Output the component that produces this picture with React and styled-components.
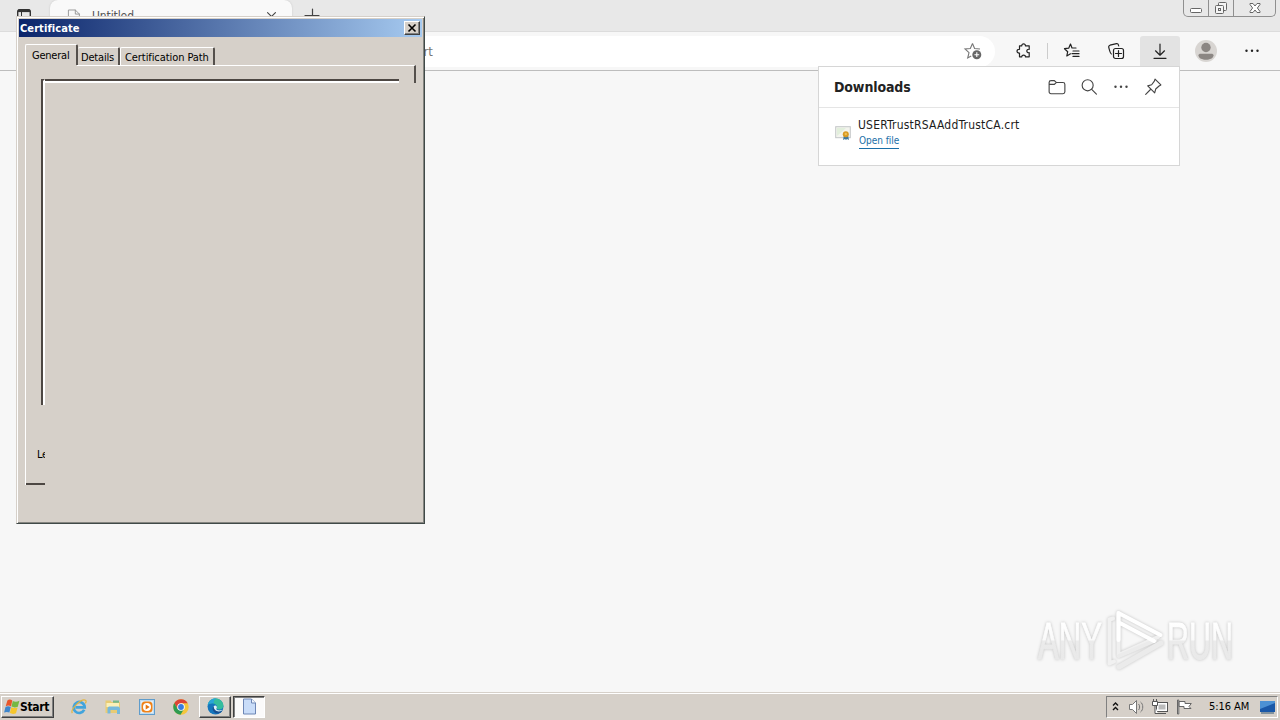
import React from "react";
import styled, { createGlobalStyle } from "styled-components";

const Global = createGlobalStyle`
  * { box-sizing: border-box; }
  html, body { margin: 0; padding: 0; overflow: hidden; }
  body { font-family: "DejaVu Sans Condensed", "DejaVu Sans", sans-serif; font-size: 11px; color: #000; }
  svg { display: block; flex: none; overflow: visible; }
`;

const Screen = styled.div`
  position: relative;
  width: 1280px;
  height: 720px;
  display: flex;
  flex-direction: column;
  overflow: hidden;
  background: #f7f7f7;
`;

/* Browser */
const TabStrip = styled.div`
  height: 32px;
  flex: none;
  display: flex;
  align-items: flex-start;
  background: #e8e8e8;
  border-bottom: 1px solid #dcdcdc;
`;
const TabActions = styled.div`
  width: 50px;
  height: 32px;
  padding: 9px 0 0 17px;
`;
const Tab = styled.div`
  width: 242px;
  height: 32px;
  display: flex;
  align-items: center;
  padding: 0 16px 0 18px;
  border-radius: 8px 8px 0 0;
  background: #f9f9f9;
  box-shadow: 0 0 2px #c4c4c4;
`;
const TabTitle = styled.span`
  flex: 1;
  margin-left: 11px;
  font-size: 12px;
  color: #555;
  letter-spacing: -0.1px;
`;
const NewTab = styled.div`
  padding: 8px 0 0 12px;
  flex: 1;
`;
const WindowButtons = styled.div`
  display: flex;
  height: 17px;
  width: 93px;
  margin-right: 4px;
  border: 1px solid #8f8f8f;
  border-top: 0;
  border-radius: 0 0 5px 5px;
`;
const WindowButton = styled.div`
  width: ${(p) => p.$w}px;
  display: flex;
  justify-content: center;
  border-right: ${(p) => (p.$last ? "0" : "1px solid #8f8f8f")};
`;
const Toolbar = styled.div`
  height: 39px;
  flex: none;
  display: flex;
  align-items: center;
  background: #f7f7f7;
  border-bottom: 1px solid #bdbdbd;
`;
const AddressBar = styled.div`
  width: 895px;
  height: 31px;
  margin-left: 100px;
  padding: 0 13px 0 317px;
  display: flex;
  align-items: center;
  justify-content: space-between;
  border-radius: 16px;
  background: #fff;
  font-size: 13px;
  color: #767676;
`;
const ToolButton = styled.div`
  width: ${(p) => p.$w || 40}px;
  height: 30px;
  margin-left: ${(p) => p.$ml || 0}px;
  display: flex;
  align-items: center;
  justify-content: center;
  border-radius: 3px 3px 0 0;
  background: ${(p) => (p.$active ? "#e3e3e3" : "transparent")};
`;
const Divider = styled.div`
  width: 1px;
  height: 16px;
  margin-left: 3px;
  background: #ccc;
`;
const Page = styled.div`
  flex: 1;
  display: flex;
  justify-content: flex-end;
  align-items: flex-end;
  padding: 0 46px 19px 0;
  background: #f7f7f7;
`;
const Watermark = styled.svg`
  font-family: "Liberation Sans", sans-serif;
  font-size: 51px;
  filter: drop-shadow(0 0 1.5px rgba(0, 0, 0, 0.22));
`;

/* Downloads flyout */
const Flyout = styled.section`
  position: absolute;
  left: 818px;
  top: 66px;
  width: 362px;
  height: 100px;
  background: #fff;
  border: 1px solid #d6d6d6;
`;
const FlyoutHeader = styled.header`
  height: 41px;
  display: flex;
  align-items: center;
  padding: 0 17px 0 15px;
  border-bottom: 1px solid #e5e5e5;
`;
const FlyoutTitle = styled.h2`
  flex: 1;
  margin: 0;
  font-size: 14px;
  font-weight: 700;
  letter-spacing: -0.12px;
  color: #222;
`;
const FlyoutActions = styled.div`
  display: flex;
  gap: 14px;
`;
const DownloadRow = styled.div`
  display: flex;
  padding: 9px 0 0 16px;
`;
const DownloadInfo = styled.div`
  display: flex;
  flex-direction: column;
  align-items: flex-start;
  margin-left: 7px;
`;
const FileName = styled.span`
  font-size: 12px;
  line-height: 16px;
  letter-spacing: 0.21px;
  color: #1c1c1c;
`;
const OpenLink = styled.a`
  font-size: 10px;
  line-height: 13px;
  margin-top: 1px;
  padding-bottom: 1px;
  margin-left: 1px;
  letter-spacing: -0.03px;
  color: #1a6fa8;
  border-bottom: 1px solid #1a6fa8;
`;

/* Certificate dialog */
const Dialog = styled.section`
  position: absolute;
  left: 16px;
  top: 16px;
  width: 409px;
  height: 508px;
  background: #d6d0c9;
  border: 1px solid #d6d0c9;
  border-right-color: #404a48;
  border-bottom-color: #404a48;
  box-shadow: inset 1px 1px #fff, inset -1px -1px #858580;
  padding: 2px;
`;
const TitleBar = styled.header`
  height: 18px;
  display: flex;
  align-items: center;
  justify-content: space-between;
  padding: 0 2px 0 1px;
  background: linear-gradient(90deg, #0a246a, #a6caf0);
  color: #fff;
  font-weight: 700;
  letter-spacing: 0.08px;
`;
const CloseButton = styled.div`
  width: 16px;
  height: 14px;
  display: flex;
  align-items: center;
  justify-content: center;
  background: #d6d0c9;
  border: 1px solid #fff;
  border-right-color: #404040;
  border-bottom-color: #404040;
  box-shadow: inset -1px -1px #808080;
`;
const DialogTabs = styled.div`
  display: flex;
  align-items: flex-end;
  height: 28px;
  padding-left: 6px;
`;
const DialogTab = styled.div`
  width: ${(p) => p.$w}px;
  height: ${(p) => (p.$active ? 21 : 18)}px;
  padding: ${(p) => (p.$active ? 4 : 3)}px 0 0 ${(p) => p.$pl}px;
  line-height: 13px;
  white-space: nowrap;
  letter-spacing: ${(p) => p.$ls}px;
  border: 1px solid #fff;
  border-left-width: ${(p) => (p.$joined ? 0 : 1)}px;
  border-right: 2px solid #55504c;
  border-bottom: 0;
  border-radius: 2px 2px 0 0;
`;
const TabPanel = styled.div`
  width: 391px;
  height: 420px;
  margin-left: 6px;
  display: grid;
  grid-template: 18px 1fr / 20px 1fr;
  border-left: 1px solid #fff;
`;
const PanelTop = styled.div`
  grid-column: 1 / 3;
  display: flex;
  justify-content: flex-end;
  align-items: flex-end;
  margin-left: 51px;
  border-top: 1px solid #fff;
  border-right: 2px solid #55504c;
`;
const GroupTop = styled.div`
  width: 357px;
  height: 4px;
  flex: none;
  margin-right: 15px;
  border-top: 2px solid #4d4743;
  border-bottom: 2px solid #fff;
`;
const PanelLeft = styled.div`
  display: flex;
  flex-direction: column;
  width: 19px;
  border-bottom: 2px solid #4d4743;
`;
const GroupLeft = styled.div`
  width: 4px;
  height: 326px;
  flex: none;
  margin: -4px 0 0 15px;
  border-left: 2px solid #4d4743;
  border-top: 2px solid #4d4743;
  border-right: 2px solid #fff;
`;
const Clipped = styled.div`
  width: 8px;
  margin: 43px 0 0 11px;
  overflow: hidden;
  white-space: nowrap;
  line-height: 13px;
  letter-spacing: -0.4px;
`;

/* Taskbar */
const Taskbar = styled.footer`
  height: 28px;
  flex: none;
  display: flex;
  align-items: center;
  padding: 0 2px 0 1px;
  background: #d6d0c9;
  border-top: 1px solid #d6d0c9;
  box-shadow: inset 0 1px #fff;
`;
const StartButton = styled.div`
  width: 53px;
  height: 22px;
  display: flex;
  align-items: center;
  padding-left: 2px;
  border: 1px solid #fff;
  border-right-color: #404040;
  border-bottom-color: #404040;
  box-shadow: inset -1px -1px #808080;
  font-size: 12px;
  font-weight: 700;
  letter-spacing: -0.3px;
`;
const QuickLaunch = styled.div`
  display: flex;
  gap: 18px;
  margin-left: 17px;
`;
const TaskButton = styled.div`
  width: 32px;
  height: 22px;
  margin-left: ${(p) => p.$ml}px;
  display: flex;
  align-items: center;
  justify-content: center;
  background: ${(p) => (p.$pressed ? "#fbfafa" : "#d6d0c9")};
  border: 1px solid;
  border-color: ${(p) => (p.$pressed ? "#404040 #fff #fff #404040" : "#fff #404040 #404040 #fff")};
  box-shadow: ${(p) => (p.$pressed ? "inset 1px 1px #808080" : "inset -1px -1px #808080")};
`;
const Tray = styled.div`
  width: 172px;
  height: 22px;
  margin-left: auto;
  display: flex;
  align-items: center;
  padding-left: 5px;
  border: 1px solid #808080;
  border-right-color: #fff;
  border-bottom-color: #fff;
`;
const TrayIcons = styled.div`
  display: flex;
  align-items: center;
  gap: 8px;
`;
const Clock = styled.time`
  width: 42px;
  margin: 0 9px 0 17px;
  white-space: nowrap;
  letter-spacing: -0.05px;
`;

const Icon = ({ size = 16, sw = 1.2, color = "#222", children }) => (
  <svg width={size} height={size} viewBox="0 0 16 16" fill="none" stroke={color} strokeWidth={sw} strokeLinejoin="round" strokeLinecap="round">
    {children}
  </svg>
);

const Dots = ({ color = "#222" }) => (
  <svg width="18" height="18" viewBox="0 0 18 18" fill={color}>
    <circle cx="3.5" cy="8.8" r="1.2" /><circle cx="9" cy="8.8" r="1.2" /><circle cx="14.5" cy="8.8" r="1.2" />
  </svg>
);

const CertFile = () => (
  <svg width="16" height="16" viewBox="0 0 16 16" style={{ marginTop: 8 }}>
    <rect x="0.7" y="1.7" width="14.6" height="11" fill="#f3f4ee" stroke="#c3c6c8" />
    <path d="M2 11V3h9Z" fill="#e2efdc" />
    <path d="m9 10-1 5 2-1 1 1 1-1 2 1-1-5Z" fill="#3f789c" />
    <circle cx="10.8" cy="9.2" r="3" fill="#d79a22" />
    <circle cx="10.8" cy="9" r="1.2" fill="#f0bf50" />
  </svg>
);

const WindowsFlag = () => (
  <svg width="16" height="16" viewBox="0 0 16 16">
    <path d="M3.4 1.4C5 .2 6.8.5 8.300 1.500L7 7.400C5.200 6.300 3.400 6.400 1.700 7.300Z" fill="#e8562a" />
    <path d="M8.800 1.900c1.900 1 4.200 1 6.600-.2l-1.600 6c-2.200 1-4.300.9-6.300-.1Z" fill="#75b843" />
    <path d="M1.500 8c1.700-.9 3.500-.9 5.300.1l-1.400 5.500c-1.700-.9-3.500-.9-5.300 0Z" fill="#3e86cc" />
    <path d="M7.300 8.300c1.900 1 4.100 1.100 6.300.1l-1.600 5.800c-2.100 1-4.200.9-6.100-.1Z" fill="#f6c62c" />
  </svg>
);

const IeIcon = () => (
  <svg width="16" height="16" viewBox="0 0 16 16" fill="none">
    <path d="M13.200 10.800A5.500 5.500 0 1 1 13.700 8.300H4.500" stroke="#42a4dc" strokeWidth="2.700" />
    <path d="M1.300 14.200C-1 11 10-1 14.500 1.200c1 .6.7 2-.2 3.200" stroke="#e4b43d" strokeWidth="1.200" />
  </svg>
);

const FolderIcon = () => (
  <svg width="16" height="16" viewBox="0 0 16 16">
    <path d="M.5 1.500h5l1 1.500h8.500V14H.5Z" fill="#e8cb74" />
    <path d="M1.500 4h12.500v4H1.500Z" fill="#fbf0b8" />
    <path d="M8 1.500h6v2.300H8Z" fill="#77b88a" />
    <path d="M2.500 14.500V10C2.500 8 3.700 7.500 5 7.500h7c1.500 0 3 .5 3 2.500V15h-3v-4H5.500v3.500Z" fill="#76b9dc" />
  </svg>
);

const MediaIcon = () => (
  <svg width="16" height="16" viewBox="0 0 16 16">
    <rect x="0.5" y="0.5" width="15" height="15" fill="#bfdcf2" stroke="#5f9ccb" />
    <rect x="2" y="2" width="12" height="12" fill="#e1eef7" />
    <rect x="2.500" y="2.500" width="11" height="11" rx="3.500" fill="#ef8219" />
    <circle cx="8" cy="8" r="4" fill="#fff" />
    <path d="m6.700 5.500 4 2.500-4 2.500Z" fill="#e57510" />
  </svg>
);

const ChromeIcon = () => (
  <svg width="16" height="16" viewBox="0 0 16 16">
    <circle cx="8" cy="8" r="7.7" fill="#f4c63c" />
    <path d="M1.300 4.100A7.700 7.700 0 0 1 14.700 4.200H8L4.700 10Z" fill="#dc4437" />
    <path d="M1.300 4.100A7.700 7.700 0 0 0 7.500 15.700L11 10H4.700Z" fill="#2e9b51" />
    <circle cx="8" cy="8" r="3.800" fill="#fff" /><circle cx="8" cy="8" r="2.900" fill="#397de0" />
  </svg>
);

const EdgeIcon = () => (
  <svg width="17" height="17" viewBox="0 0 17 17">
    <circle cx="8.500" cy="8.500" r="8" fill="#1576bd" />
    <path d="M.7 7C2 2 6 .3 9.200.6c4.200.3 7.200 3.700 7.200 7 0 2.700-2 4-4 4-2.300 0-3.200-.8-2.700-1.500C11 8.200 9 5.800 6.500 5.400 3.600 5 1.700 6 .7 7Z" fill="#35bd9d" />
    <path d="M.7 7C2 2 6 .3 9.200.6c-3 1.700-2 4-2.700 4.800C3.600 5 1.700 6 .7 7Z" fill="#2aa6d8" />
    <path d="M6.800 8C5 11 7.700 15 12 14c1.500-.3 2.500-1 3.300-2.200-3 1.300-7.300.4-5.600-1.700.9-1.300-.8-3.700-2.900-2.100Z" fill="#e2f0f6" />
    <path d="M6.800 8C4.300 10.500 6 14.400 9.700 15.400c2 .2 4.500-.8 5.600-2.700-5 2.200-9-.7-8.500-4.700Z" fill="#174f91" />
  </svg>
);

const DocumentIcon = () => (
  <svg width="15" height="17" viewBox="0 0 15 17">
    <path d="M1.500 1h8l4 4v11h-12Z" fill="#c9dcf8" stroke="#6d86b5" />
    <path d="M9.500 1v4h4" fill="#f4f8ff" stroke="#6d86b5" />
  </svg>
);

const AnyRunMark = () => (
  <Watermark width="200" height="64" viewBox="0 0 200 64">
    <defs>
      <linearGradient id="markFill" x1="0" y1="13" x2="0" y2="50" gradientUnits="userSpaceOnUse">
        <stop offset="0" stopColor="#fff" /><stop offset="0.48" stopColor="#fafafa" />
        <stop offset="0.52" stopColor="#ebebeb" /><stop offset="1" stopColor="#e9e9e9" />
      </linearGradient>
    </defs>
    <g fill="url(#markFill)" stroke="url(#markFill)" strokeWidth="0.8">
      <text x="4" y="50" textLength="64" lengthAdjust="spacingAndGlyphs">ANY</text>
      <text x="133" y="50" textLength="66" lengthAdjust="spacingAndGlyphs">RUN</text>
    </g>
    <g fill="none" strokeLinejoin="round" strokeLinecap="round">
      <path d="M79 9.500 75.500 10.500V54.500L80 52.500" stroke="#f1f1f1" strokeWidth="4" />
      <path d="M84.500 4v42L124 28" stroke="#f0f0f0" strokeWidth="4" />
      <path d="M85 58 127 34" stroke="#ebebeb" strokeWidth="5" />
      <path d="M85 47 121 31.500" stroke="#ebebeb" strokeWidth="4" />
      <path d="M84.500 31V4L126.500 26M86 14l34 18" stroke="#fff" strokeWidth="4" />
    </g>
  </Watermark>
);

export default function App() {
  return (
    <Screen>
      <Global />
      <TabStrip>
        <TabActions>
          <svg width="14" height="14" viewBox="0 0 14 14" fill="none" stroke="#333">
            <rect x="0.7" y="0.7" width="12.6" height="12" rx="2" strokeWidth="1.4" />
            <path d="M1 1.800h12" strokeWidth="2.600" /><path d="M4.500 3v10" />
          </svg>
        </TabActions>
        <Tab>
          <Icon size={13} color="#999"><path d="M1 0h8l5 5v11H1ZM9 0v5h5" /></Icon>
          <TabTitle>Untitled</TabTitle>
          <Icon size={9} color="#444" sw={2}><path d="m1 1 14 14M15 1 1 15" /></Icon>
        </Tab>
        <NewTab><Icon color="#444"><path d="M8.500 1v14M1 7.500h14" /></Icon></NewTab>
        <WindowButtons>
          <WindowButton $w={25}>
            <svg width="13" height="16" fill="#fff" stroke="#666"><rect x="0.500" y="8.500" width="11" height="4" rx="1" /></svg>
          </WindowButton>
          <WindowButton $w={25}>
            <svg width="13" height="16" fill="#f4f4f4" stroke="#666"><rect x="3.500" y="2.500" width="8" height="8" rx="1" /><rect x="0.500" y="5.500" width="8" height="8" rx="1" /><rect x="3.500" y="8.500" width="2" height="2" /></svg>
          </WindowButton>
          <WindowButton $w={41} $last>
            <svg width="12" height="16" fill="#fff" stroke="#666"><path d="M1 3.500h3l2 2.500 2-2.500h3v1L8.400 8l2.600 3.500v1H8L6 10l-2 2.500H1v-1L3.600 8 1 4.500Z" /></svg>
          </WindowButton>
        </WindowButtons>
      </TabStrip>

      <Toolbar>
        <AddressBar>
          <span>crt</span>
          <svg width="18" height="18" viewBox="0 0 18 18" fill="none" stroke="#777" strokeWidth="1.1">
            <path d="m8.500 1.500 2.100 5 5.400.5M8.500 1.500l-2.200 5L1 7l4 3.700L3.700 16l3.500-2" />
            <circle cx="12.800" cy="12.700" r="4.500" fill="#666" stroke="none" /><path d="M10.400 12.700h4.800M12.800 10.300v4.800" stroke="#fff" />
          </svg>
        </AddressBar>
        <ToolButton $ml={9}>
          <Icon><path d="M3.500 2.800h2.300C5.500.3 9.700.3 9.400 2.800H13.200V6.300C10 5.800 10 10.200 13.200 9.700V13.800H9.400C9.600 11.600 5.700 11.600 5.800 13.800H3.500V10C.2 10.400.2 5.900 3.500 6.300Z" /></Icon>
        </ToolButton>
        <Divider />
        <ToolButton $ml={4}>
          <Icon><path d="M6.500 1 8 5h4M6.500 1 4.700 5.200.5 5.700l3.200 3L2.800 13l3.700-2.200M9 8h6M8 10.700h7M9 13.400h6" /></Icon>
        </ToolButton>
        <ToolButton $ml={4}>
          <Icon><rect x="5.500" y="5.500" width="10" height="10" rx="2" /><path d="M10.500 7.500v6M7.500 10.500h6M3.500 11C2.700 11 2 9.500.8 4.700.4 3 1 2.500 2 2.200L8.500.6c1-.2 1.800.3 2.200 2.400" /></Icon>
        </ToolButton>
        <ToolButton $ml={4} $active>
          <Icon><path d="M8 1v11M3.500 7.800 8 12.200l4.500-4.400M2 15.300h12" /></Icon>
        </ToolButton>
        <ToolButton $ml={6}>
          <svg width="22" height="22" viewBox="0 0 22 22"><circle cx="11" cy="11" r="11" fill="#d8d5d2" /><circle cx="11" cy="7.500" r="4.700" fill="#8b8683" /><path d="M3.500 15.200c0-1 1-1.500 2-1.500h11c1 0 2 .5 2 1.500 0 6-15 6-15 0Z" fill="#8b8683" /></svg>
        </ToolButton>
        <ToolButton $ml={6}><Dots /></ToolButton>
      </Toolbar>

      <Page>
        <AnyRunMark />
      </Page>

      <Taskbar>
        <StartButton><WindowsFlag /><span>Start</span></StartButton>
        <QuickLaunch><IeIcon /><FolderIcon /><MediaIcon /><ChromeIcon /></QuickLaunch>
        <TaskButton $ml={10}><EdgeIcon /></TaskButton>
        <TaskButton $ml={2} $pressed><DocumentIcon /></TaskButton>
        <Tray>
          <TrayIcons>
            <svg width="8" height="12" fill="none" stroke="#111" strokeWidth="1.4"><path d="m1 4.500 2.500-2.500 2.500 2.500M1 9l2.500-2.500L6 9" /></svg>
            <svg width="16" height="16" fill="#fff" stroke="#777"><path d="M1.500 5.500h3l4-4v13l-4-4h-3Z" /><path d="M10.500 5c1.500 1 1.500 5 0 6M12.500 3c3 2 3 8 0 10" fill="none" /></svg>
            <svg width="16" height="16" fill="#fff" stroke="#555"><rect x="4.500" y="3.500" width="11" height="9" /><path d="M6 14.500h8" /><rect x="6.500" y="5.500" width="7" height="5" fill="#bbb" stroke="none" /><path d="M1.500 0v2M4.500 0v2M.5 2.500h5v4h-5ZM3 7v7.500h3" /></svg>
            <svg width="16" height="16" fill="#fff" stroke="#666"><path d="M1.500 1v14h1.300V1ZM3 2.500h6v2h6.300L13 7.500l2 2H8v-2H3Z" /></svg>
          </TrayIcons>
          <Clock>5:16 AM</Clock>
          <svg width="16" height="14" viewBox="0 0 16 14"><rect width="15" height="11" x="0" y="1" fill="#1a58a8" /><path d="M0 1h15v2L0 9Z" fill="#4c91d4" /><path d="M1 13h13" stroke="#315674" /></svg>
        </Tray>
      </Taskbar>

      <Flyout>
        <FlyoutHeader>
          <FlyoutTitle>Downloads</FlyoutTitle>
          <FlyoutActions>
            <Icon size={18} color="#444" sw={1}><path d="M1 4c0-1 .7-1.700 1.700-1.700h3L7.300 4h6c1 0 1.700.7 1.700 1.700v6.600c0 1-.7 1.700-1.700 1.700H2.700C1.700 14 1 13.300 1 12.300ZM1 5.700h4.700L7.300 4" /></Icon>
            <Icon size={18} color="#444" sw={1}><circle cx="6.800" cy="6.500" r="4.900" /><path d="m10.400 10.100 4.200 4.200" /></Icon>
            <Dots color="#444" />
            <Icon size={18} color="#444" sw={1}><path d="m9.800 1 5.200 5.200-1.600.9-3 2.700-.9 3.500L3.300 7l3.500-1 2.400-3.200ZM6 10l-4.500 4.500" /></Icon>
          </FlyoutActions>
        </FlyoutHeader>
        <DownloadRow>
          <CertFile />
          <DownloadInfo>
            <FileName>USERTrustRSAAddTrustCA.crt</FileName>
            <OpenLink>Open file</OpenLink>
          </DownloadInfo>
        </DownloadRow>
      </Flyout>

      <Dialog>
        <TitleBar>
          <span>Certificate</span>
          <CloseButton><svg width="9" height="8" stroke="#000" strokeWidth="1.6"><path d="m.5 .5 7 7M7.500 .5l-7 7" /></svg></CloseButton>
        </TitleBar>
        <DialogTabs>
          <DialogTab $w={53} $pl={6} $ls={-0.22} $active>General</DialogTab>
          <DialogTab $w={42} $pl={3} $ls={-0.18} $joined>Details</DialogTab>
          <DialogTab $w={95} $pl={4} $ls={-0.08}>Certification Path</DialogTab>
        </DialogTabs>
        <TabPanel>
          <PanelTop><GroupTop /></PanelTop>
          <PanelLeft>
            <GroupLeft />
            <Clipped>Le</Clipped>
          </PanelLeft>
        </TabPanel>
      </Dialog>
    </Screen>
  );
}
